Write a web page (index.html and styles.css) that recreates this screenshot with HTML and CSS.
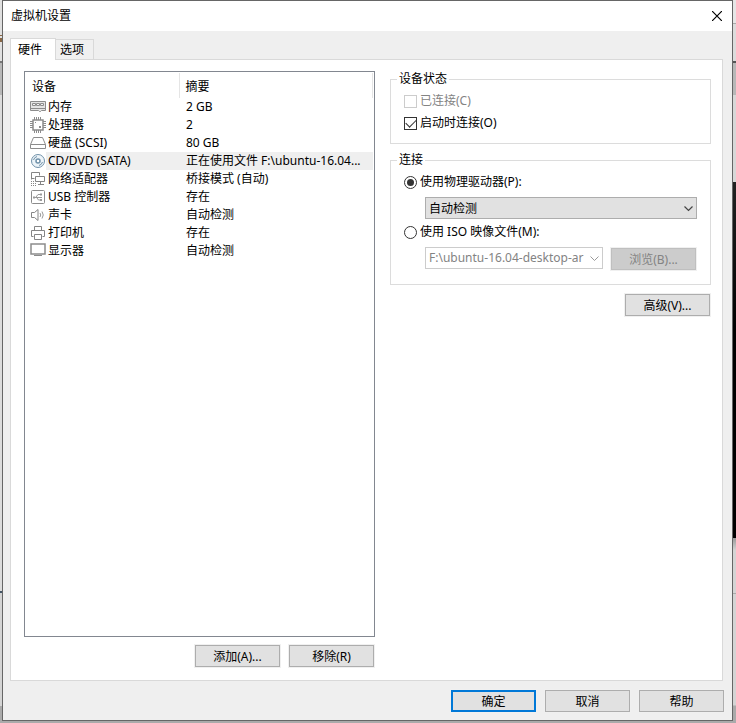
FILE: index.html
```html
<!DOCTYPE html>
<html lang="zh-CN">
<head>
<meta charset="utf-8">
<title>虚拟机设置</title>
<link rel="stylesheet" href="styles.css">
</head>
<body>
<main class="dialog">
  <header class="titlebar">
    <h1>虚拟机设置</h1>
    <button class="close" type="button" aria-label="关闭"><svg width="10" height="10" viewBox="0 0 10 10"><path d="M0 0L10 10M10 0L0 10" stroke="#000" stroke-width="1.2"/></svg></button>
  </header>
  <nav class="tabs">
    <button class="tab active" type="button">硬件</button>
    <button class="tab" type="button">选项</button>
  </nav>
  <section class="page">
    <div class="devices">
      <div class="list">
        <table>
          <thead><tr><th>设备</th><th>摘要</th></tr></thead>
          <tbody>
            <tr><td><span class="name"><svg class="icon" viewBox="0 0 16 16"><path d="M.5 2.500h15v9h-4l-1 1h-1l-1-1h-8z" fill="#e4e4e4" stroke="#8c8c8c"/><path d="M2.500 4.500h3v2h-3zM6.500 4.500h3v2h-3zM10.500 4.500h3v2h-3z" fill="#f4f4f4" stroke="#8c8c8c"/><path d="M1 9.500h14" stroke="#8c8c8c"/></svg>内存</span></td><td>2 GB</td></tr>
            <tr><td><span class="name"><svg class="icon" viewBox="0 0 16 16"><path d="M4.500 0v3M6.500 0v3M8.500 0v3M10.500 0v3M4.500 13v3M6.500 13v3M8.500 13v3M10.500 13v3M0 4.500h3M0 6.500h3M0 8.500h3M0 10.500h3M13 4.500h3M13 6.500h3M13 8.500h3M13 10.500h3" stroke="#8c8c8c"/><path d="M3 3h10v10H3z" fill="#fff" stroke="#8c8c8c" stroke-width="1.500"/><path d="M5 5h1v1H5zM9 9h2v2H9z" fill="#8c8c8c"/></svg>处理器</span></td><td>2</td></tr>
            <tr><td><span class="name"><svg class="icon" viewBox="0 0 16 16"><path d="M3.500 2.500h9l3 7v4H.5v-4zM.5 9.500h15" fill="#fff" stroke="#8c8c8c"/></svg>硬盘 (SCSI)</span></td><td>80 GB</td></tr>
            <tr class="selected"><td><span class="name"><svg class="icon" viewBox="0 0 16 16"><circle cx="8" cy="8" r="6.500" fill="#edf4f9" stroke="#7192aa"/><path d="M3.500 7A5 5 0 0 1 7 3.500M12.500 9A5 5 0 0 1 9 12.500" fill="none" stroke="#7192aa"/><circle cx="8" cy="8" r="2" fill="#fff" stroke="#7192aa" stroke-width="1.500"/></svg>CD/DVD (SATA)</span></td><td>正在使用文件 F:\ubuntu-16.04...</td></tr>
            <tr><td><span class="name"><svg class="icon" viewBox="0 0 16 16"><path d="M1.500 8.500v-7h8v3M1.500 7.500h3" fill="none" stroke="#858585"/><path d="M5.500 5.500h9v5h-9zM10.500 11v3M8 13.500h6" fill="none" stroke="#858585"/><path d="M1 10.500h4M1 12.500h6M1 14.500h6" stroke="#858585" stroke-dasharray="1 1"/></svg>网络适配器</span></td><td>桥接模式 (自动)</td></tr>
            <tr><td><span class="name"><svg class="icon" viewBox="0 0 16 16"><rect x="1.500" y="1.500" width="13" height="13" rx="1" fill="#fff" stroke="#8c8c8c"/><path d="M4 8.500h8M6 8l2-2.500h2M7 9l1.500 2H10" fill="none" stroke="#999"/><path d="M3 7.500h2v2H3zM10 4.500h2v2h-2zM10 10h2v2h-2z" fill="#999"/></svg>USB 控制器</span></td><td>存在</td></tr>
            <tr><td><span class="name"><svg class="icon" viewBox="0 0 16 16"><path d="M1.500 5.500h3l3.500-3v11l-3.500-3h-3z" fill="#fff" stroke="#858585"/><path d="M10 6q1.500 2 0 4M12 4.500q2.500 3.500 0 7" fill="none" stroke="#999"/></svg>声卡</span></td><td>自动检测</td></tr>
            <tr><td><span class="name"><svg class="icon" viewBox="0 0 16 16"><path d="M4.500 5.500v-4h7v4M3.500 11.500h-2v-6h13v6h-2M4.500 9.500h7v5h-7z" fill="none" stroke="#858585"/></svg>打印机</span></td><td>存在</td></tr>
            <tr><td><span class="name"><svg class="icon" viewBox="0 0 16 16"><path d="M1 1h14v10H1z" fill="#fff" stroke="#8c8c8c" stroke-width="1.500"/><path d="M4 12.500h8" stroke="#8c8c8c"/></svg>显示器</span></td><td>自动检测</td></tr>
          </tbody>
        </table>
      </div>
      <div class="actions">
        <button class="btn" type="button">添加(A)...</button>
        <button class="btn" type="button">移除(R)</button>
      </div>
    </div>
    <div class="settings">
      <fieldset class="status">
        <legend>设备状态</legend>
        <label class="choice off"><input type="checkbox" disabled>已连接(C)</label>
        <label class="choice"><input type="checkbox" checked>启动时连接(O)</label>
      </fieldset>
      <fieldset class="connection">
        <legend>连接</legend>
        <label class="choice"><input type="radio" name="source" checked>使用物理驱动器(P):</label>
        <div class="row">
          <div class="combo">
            <select aria-label="物理驱动器"><option>自动检测</option></select>
            <svg width="9" height="6" viewBox="0 0 9 6"><path d="M.5 .5l4 4 4-4" fill="none" stroke="#444" stroke-width="1.200"/></svg>
          </div>
        </div>
        <label class="choice"><input type="radio" name="source">使用 ISO 映像文件(M):</label>
        <div class="row">
          <div class="combo">
            <select aria-label="ISO 映像文件" disabled><option>F:\ubuntu-16.04-desktop-ar</option></select>
            <svg width="9" height="6" viewBox="0 0 9 6"><path d="M.5 .5l4 4 4-4" fill="none" stroke="#999"/></svg>
          </div>
          <button class="btn" type="button" disabled>浏览(B)...</button>
        </div>
      </fieldset>
      <button class="btn advanced" type="button">高级(V)...</button>
    </div>
  </section>
  <footer class="footer">
    <button class="btn primary" type="button">确定</button>
    <button class="btn" type="button">取消</button>
    <button class="btn" type="button">帮助</button>
  </footer>
</main>
</body>
</html>
```
FILE: styles.css
```css
* { box-sizing: border-box; }

body {
  margin: 0;
  min-height: 100vh;
  display: flex;
  padding: 0 3px 2px 2px;
  font: 12px/18px "Noto Sans", "Noto Sans CJK SC", sans-serif;
  color: #000;
  background:
    linear-gradient(#e6e6e6 23px, #aaa 23px 24px, #dcdcdc 24px 61px, #555 61px 63px, #b8b8b8 63px 95px, #d8d8d8 95px 182px, #222 182px, #000 330px 538px, #999 538px, #d4d4d4 550px 593px, #aaa 593px 594px, #d4d4d4 594px 705px, #aaa 706px) right / 3px 100% no-repeat,
    linear-gradient(#e0e0e0 35px, #864 35px 36px, #e0e0e0 36px 38px, #864 38px 42px, #e0e0e0 42px 61px, #777 61px 63px, #b8b8b8 63px 95px, #dcdcdc 95px 591px, #456 591px 593px, #d4d4d4 593px 706px, #aaa 706px);
}
button, select, input { font: inherit; color: inherit; margin: 0; }

.dialog {
  flex: 1;
  display: flex;
  flex-direction: column;
  border: 1px solid #666;
  background: #efefef;
}

.titlebar {
  height: 30px;
  display: flex;
  align-items: center;
  justify-content: space-between;
  padding: 0 10px 0 8px;
  background: #fff;
}
.titlebar h1 { margin: 0; font-size: 12px; font-weight: 400; }
.close { display: flex; padding: 0; border: 0; background: none; }

.tabs {
  display: flex;
  align-items: flex-end;
  height: 28px;
  padding: 0 7px;
}
.tab {
  height: 20px;
  width: 38px;
  padding: 1px 5px 0 0;
  border: 1px solid #d9d9d9;
  border-width: 1px 1px 0 0;
  background: #f0f0f0;
}
.tab.active {
  position: relative;
  width: 46px;
  height: 22px;
  margin-bottom: -1px;
  border-left-width: 1px;
  background: #fff;
  padding: 0 6px 0 0;
}

.page {
  flex: 1;
  display: grid;
  grid-template-columns: 351fr 321fr;
  gap: 15px;
  margin: 0 9px 0 7px;
  padding: 11px 11px 12px 13px;
  border: 1px solid #d9d9d9;
  background: #fff;
}
.devices { display: flex; flex-direction: column; gap: 7px; min-width: 0; }
.list { flex: 1; border: 1px solid #828790; padding: 1px; }

table { width: 100%; border-collapse: collapse; table-layout: fixed; }
th {
  height: 25px;
  padding: 3px 7px 0 6px;
  border-right: 1px solid #e5e5e5;
  font-weight: 400;
  text-align: left;
}
th:first-child { width: 153px; }
td {
  height: 18px;
  padding: 0 0 0 7px;
  white-space: nowrap;
  overflow: hidden;
}
td:first-child { padding-left: 4px; }
.name { display: flex; align-items: center; gap: 2px; height: 18px; }
.icon { width: 16px; height: 16px; flex: none; }
.selected { background: linear-gradient(90deg, #fff 20px, #efefef 20px); }

.actions { display: flex; justify-content: flex-end; gap: 7px; }
.btn {
  width: 85px;
  height: 22px;
  margin: 1px;
  padding: 1px 0 0;
  border: 1px solid #adadad;
  background: #e1e1e1;
  box-shadow: 0 0 0 1px #f0f0f0;
}
.btn:disabled { border-color: #bfbfbf; background: #ccc; color: #838383; }
.btn.primary { border: 2px solid #0078d7; }

.settings { display: flex; flex-direction: column; min-width: 0; }
fieldset {
  margin: 0;
  padding: 0 13px;
  border: 1px solid #dcdcdc;
  min-width: 0;
}
legend { padding: 0 2px; margin-left: -7px; height: 18px; }
.status { height: 74px; margin-top: -1px; }
.connection { height: 134px; margin: 7px 0 8px; }

.choice { display: flex; align-items: center; gap: 3px; height: 22px; }
.choice.off { color: #838383; }
legend + .choice { margin-top: 2px; }
.choice input {
  appearance: none;
  display: grid;
  place-items: center;
  width: 13px;
  height: 13px;
  border: 1px solid #333;
  background: #fff;
}
.choice input:disabled { border-color: #ccc; }
.choice input[type="radio"] { border-radius: 50%; }
.choice input[type="radio"]:checked::before {
  content: "";
  width: 7px;
  height: 7px;
  border-radius: 50%;
  background: #333;
}
.choice input[type="checkbox"]:checked::before {
  content: "";
  width: 9px;
  height: 5px;
  margin-top: -3px;
  border: solid #333;
  border-width: 0 0 1px 1px;
  transform: rotate(-45deg);
}

.row { display: flex; gap: 7px; margin: 4px 0 2px 21px; }
.combo { position: relative; flex: 1; min-width: 0; height: 22px; }
.combo select {
  appearance: none;
  display: block;
  width: 100%;
  height: 100%;
  padding: 1px 18px 0 3px;
  border: 1px solid #adadad;
  border-radius: 0;
  background: #e1e1e1;
}
.combo select:disabled { border-color: #ccc; background: #fff; color: #838383; opacity: 1; padding-top: 0; }
.combo svg { position: absolute; right: 4px; top: 9px; pointer-events: none; }
.advanced { align-self: flex-end; }

.footer {
  display: flex;
  justify-content: flex-end;
  gap: 7px;
  padding: 8px 7px 7px;
}
```
